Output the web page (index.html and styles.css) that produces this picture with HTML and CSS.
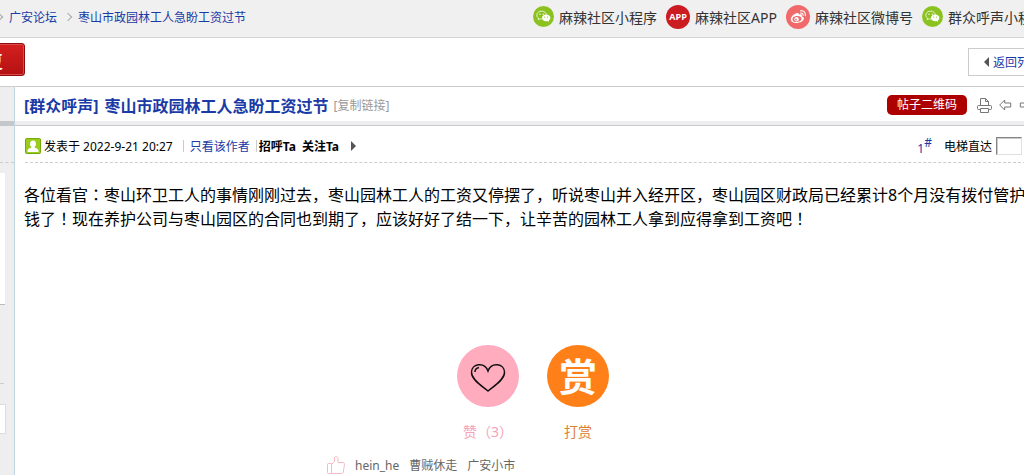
FILE: index.html
```html
<!DOCTYPE html>
<html lang="zh-CN">
<head>
    <meta charset="UTF-8">
    <meta name="viewport" content="width=device-width, initial-scale=1.0">
    <title>枣山市政园林工人急盼工资过节</title>
    <link rel="stylesheet" href="styles.css">
</head>
<body>
    <svg class="sprite" aria-hidden="true">
        <symbol id="wechat" viewBox="0 0 22 22">
            <circle cx="11" cy="11" r="11" fill="#8cc220"/>
            <path d="M9 5.400c-2.900 0-5 1.800-5 4.100 0 1.300.7 2.400 1.800 3.200l-.4 1.700 1.900-1c.5.2 1.100.2 1.700.2 2.900 0 5-1.800 5-4.100s-2.100-4.100-5-4.100z" fill="none" stroke="#fff" stroke-width=".8"/>
            <circle cx="7.300" cy="8.600" r=".7" fill="#fff"/>
            <circle cx="10.700" cy="8.600" r=".7" fill="#fff"/>
            <path d="M13.800 8.800c-2.500 0-4.300 1.600-4.300 3.600s1.800 3.600 4.300 3.600c.5 0 1-.1 1.400-.2l1.700.9-.4-1.500c1-.6 1.700-1.700 1.700-2.800 0-2-1.900-3.600-4.400-3.600z" fill="#fff"/>
            <circle cx="12.300" cy="11.600" r=".6" fill="#8cc220"/>
            <circle cx="15.300" cy="11.600" r=".6" fill="#8cc220"/>
        </symbol>
    </svg>
    <div class="page">
        <header class="top-bar">
            <nav class="crumbs">
                <i class="crumb-arrow"></i>
                <a href="#">广安论坛</a>
                <i class="crumb-arrow"></i>
                <a href="#">枣山市政园林工人急盼工资过节</a>
            </nav>
            <nav class="social">
                <a class="small-icon" href="#"><svg><use href="#wechat"/></svg>麻辣社区小程序</a>
                <a href="#"><span class="app-icon">APP</span>麻辣社区APP</a>
                <a href="#">
                    <svg viewBox="0 0 24 24">
                        <circle cx="12" cy="12" r="12" fill="#f0696b"/>
                        <path d="M10.500 8.200c1.500-.7 2.700-.2 2.300 1.500 2-.8 3.700-.3 3 1.500 1.500.5 2.200 1.400 2 2.600-.3 2.300-3.400 4.200-6.800 4.200-3.600 0-6.400-1.600-6.200-4.100.2-2.100 3-5 5.700-5.700z" fill="#fff"/>
                        <ellipse cx="11" cy="14" rx="4.500" ry="3" fill="#f0696b" transform="rotate(-6 11 14)"/>
                        <circle cx="10.600" cy="14.200" r="2.200" fill="#fff"/>
                        <circle cx="10" cy="14.600" r=".9" fill="#f0696b"/>
                        <path d="M14.500 5.900c3-.8 5.600 1.600 4.800 4.800M14.800 8.100c1.500-.3 2.700.8 2.300 2.300" fill="none" stroke="#fff" stroke-width="1.100" stroke-linecap="round"/>
                    </svg>麻辣社区微博号</a>
                <a class="small-icon" href="#"><svg><use href="#wechat"/></svg>群众呼声小程序</a>
            </nav>
        </header>

        <div class="tool-bar">
            <button class="reply-button" type="button">回复</button>
            <a class="back-link" href="#"><i class="tri-left"></i>返回列表</a>
        </div>

        <div class="thread">
            <aside class="side">
                <div class="side-head"></div>
                <div class="side-name"></div>
                <div class="side-avatar"></div>
                <div class="side-line"></div>
                <div class="side-box"></div>
            </aside>
            <main class="main">
                <div class="title-bar">
                    <h1><a href="#">[群众呼声]</a><a href="#">枣山市政园林工人急盼工资过节</a></h1>
                    <a class="copy-link" href="#">[复制链接]</a>
                    <div class="title-tools">
                        <button class="qr-button" type="button">帖子二维码</button>
                        <a href="#" aria-label="打印">
                            <svg class="print" viewBox="0 0 15 16">
                                <path d="M3.500 8.500v-7h5l3 3v4M8.500 1.500v3h3M3.500 12.500h-2a1 1 0 0 1-1-1v-2a1 1 0 0 1 1-1h12a1 1 0 0 1 1 1v2a1 1 0 0 1-1 1h-2M3.500 11.500h8v4h-8z"/>
                            </svg>
                        </a>
                        <a href="#" aria-label="上一主题">
                            <svg class="arrow" viewBox="0 0 13 12"><path d="M.7 6l5-5v3h6v4h-6v3z"/></svg>
                        </a>
                        <a href="#" aria-label="下一主题">
                            <svg class="arrow" viewBox="0 0 13 12"><path d="M12.300 6l-5-5v3h-6v4h6v3z"/></svg>
                        </a>
                    </div>
                </div>

                <div class="post-info">
                    <svg class="user-icon" viewBox="0 0 16 16">
                        <rect x=".5" y=".5" width="15" height="15" rx="1" fill="#9bcb1d" stroke="#75a80c"/>
                        <path d="M8 2.500c1.900 0 3 1.300 3 3.200 0 1.300-.5 2.300-1.300 2.900v1.100c1.700.4 3.800 1.100 3.800 3v1.300h-11v-1.300c0-1.900 2.100-2.600 3.800-3V8.600C5.500 8 5 7 5 5.700c0-1.900 1.100-3.200 3-3.200z" fill="#fff"/>
                    </svg>
                    <span class="date">发表于 2022-9-21 20:27</span>
                    <i class="pipe"></i>
                    <a href="#">只看该作者</a>
                    <i class="pipe"></i>
                    <b>招呼Ta</b>
                    <b class="follow">关注Ta</b>
                    <i class="tri-right"></i>
                    <div class="floor">
                        <a class="floor-no" href="#">1<sup>#</sup></a>
                        <label for="floor-input">电梯直达</label>
                        <input id="floor-input" type="text">
                    </div>
                </div>

                <p class="message">各位看官<span class="mark" lang="ja">：</span>枣山环卫工人的事情刚刚过去，枣山园林工人的工资又停摆了，听说枣山并入经开区，枣山园区财政局已经累计8个月没有拨付管护钱了<span class="mark" lang="ja">！</span>现在养护公司与枣山园区的合同也到期了，应该好好了结一下，让辛苦的园林工人拿到应得拿到工资吧<span class="mark" lang="ja">！</span></p>

                <div class="actions">
                    <button class="like" type="button">
                        <span class="circle">
                            <svg viewBox="0 0 36 30">
                                <path d="M18 28C13 23.500 1.500 17 1.500 9.500c0-9 13-11 16.500-1.500 3.500-9.500 16.500-7.500 16.500 1.500C34.500 17 23 23.500 18 28z"/>
                                <path d="M5 9c0-2.500 1.500-4 4-4.500"/>
                            </svg>
                        </span>
                        赞（3）
                    </button>
                    <button class="reward" type="button">
                        <span class="circle">赏</span>
                        打赏
                    </button>
                </div>

                <div class="likers">
                    <svg viewBox="0 0 18 18">
                        <path d="M1.500 7.500h3v10h-3a1 1 0 0 1-1-1v-8a1 1 0 0 1 1-1zM4.500 8.500l3-3V2c0-2 3.500-2 3.500.5v4h5c1 0 1.500.7 1.500 1.500l-1.200 8c-.1.900-.7 1.500-1.600 1.500H4.500"/>
                    </svg>
                    <a href="#">hein_he</a>
                    <a href="#">曹贼休走</a>
                    <a href="#">广安小市</a>
                </div>
            </main>
        </div>
    </div>
</body>
</html>
```

FILE: styles.css
```css
* {
    box-sizing: border-box;
}

body, html {
    margin: 0;
    padding: 0;
    height: 100%;
    overflow: hidden;
    background: #fff;
}

body, button, input {
    font-family: "Noto Sans", "Noto Sans CJK SC", sans-serif;
    font-size: 12px;
    color: #000;
}

a {
    color: #1a3aa6;
    text-decoration: none;
}

button {
    padding: 0;
    border: none;
    cursor: pointer;
}

.sprite {
    display: none;
}

/* the board is a little wider than the window */
.page {
    display: flex;
    flex-direction: column;
    min-height: 100%;
    margin-right: -27px;
}

.top-bar {
    display: flex;
    align-items: center;
    justify-content: space-between;
    height: 38px;
    padding-right: 5px;
    padding-bottom: 4px;
    background: #f0f0f0;
    border-bottom: 1px solid #d5d5d5;
    white-space: nowrap;
}

.crumbs {
    display: flex;
    align-items: center;
    gap: 8px;
    margin-left: -4px;
}

.crumb-arrow {
    width: 6px;
    height: 6px;
    margin-right: -1px;
    border-top: 1px solid #aaa;
    border-right: 1px solid #aaa;
    transform: rotate(45deg);
}

.social {
    display: flex;
    align-items: center;
    gap: 9px;
}

.social a {
    display: flex;
    align-items: center;
    gap: 5px;
    font-size: 14px;
    color: #333;
}

.social svg, .app-icon {
    width: 24px;
    height: 24px;
}

.social .small-icon svg {
    width: 21px;
    height: 21px;
}

.app-icon {
    border-radius: 50%;
    background: #cb1c22;
    color: #fff;
    font: bold 9px/24px "Open Sans", sans-serif;
    text-align: center;
}

.tool-bar {
    display: flex;
    align-items: flex-start;
    justify-content: space-between;
    height: 49px;
    padding-top: 5px;
    border-bottom: 1px solid #ccc;
}

.reply-button {
    width: 80px;
    height: 33px;
    margin-left: -55px;
    border: 1px solid #8c0d0d;
    border-radius: 3px;
    box-shadow: inset 0 0 0 1px #dc4a4a;
    background: linear-gradient(#d51f1f, #b41212);
    color: #fff;
    font-size: 18px;
    font-weight: bold;
}

.back-link {
    display: flex;
    align-items: center;
    gap: 4px;
    height: 28px;
    margin-top: 5px;
    padding: 0 9px 0 15px;
    border: 1px solid #ccc;
}

.tri-left {
    border: 5px solid transparent;
    border-right-color: #555;
    border-left: none;
}

.tri-right {
    margin-left: 8px;
    border: 5px solid transparent;
    border-left-color: #555;
    border-right: none;
}

.thread {
    display: flex;
    flex: 1;
}

.side {
    width: 14px;
    background: #eee;
}

.side-head {
    height: 39px;
    border-bottom: 5px solid #c4c8cb;
}

.side-name {
    height: 37px;
    border-bottom: 1px dashed #ccc;
}

.side-avatar {
    height: 132px;
    margin: 10px 9px 0 0;
    background: #fff;
    border-bottom: 1px solid #bbb;
}

.side-line {
    height: 79px;
    margin-right: 10px;
    border-bottom: 1px solid #ccc;
}

.side-box {
    height: 30px;
    margin: 20px 8px 0 0;
    background: #fff;
    border: 1px solid #ddd;
    border-left: none;
}

.main {
    flex: 1;
    min-width: 0;
    border-left: 1px solid #c2d5e3;
}

.title-bar {
    display: flex;
    align-items: center;
    height: 39px;
    padding-left: 9px;
    padding-bottom: 2px;
    border-bottom: 1px solid #c8ccd0;
    box-shadow: inset 0 -4px #eee;
    white-space: nowrap;
}

h1 {
    display: flex;
    gap: 6px;
    margin: 0;
    font-size: 16px;
}

.copy-link {
    margin-left: 5px;
    color: #999;
}

.title-tools {
    display: flex;
    align-items: center;
    gap: 7px;
    margin-left: auto;
    padding-right: 19px;
}

.title-tools a {
    display: flex;
}

.title-tools svg {
    fill: none;
    stroke: #777;
}

.qr-button {
    width: 80px;
    height: 20px;
    margin-right: 3px;
    border-radius: 5px;
    background: #ad0000;
    color: #fff;
    line-height: 20px;
}

.print {
    width: 15px;
    height: 16px;
}

.arrow {
    width: 13px;
    height: 12px;
}

.post-info {
    display: flex;
    align-items: center;
    height: 37px;
    margin-left: 10px;
    padding-top: 3px;
    border-bottom: 1px dashed #ccc;
    white-space: nowrap;
}

.user-icon {
    width: 16px;
    height: 16px;
    margin-right: 3px;
}

.date {
    margin-right: 4px;
}

.pipe {
    width: 1px;
    height: 12px;
    margin: 0 6px;
    background: #ccc;
}

.pipe + b {
    margin-left: -4px;
}

.follow {
    margin: 0 4px 0 6px;
}

.floor {
    display: flex;
    align-items: center;
    margin-left: auto;
    padding-right: 29px;
}

.floor-no {
    display: flex;
    align-items: flex-end;
    margin-right: 12px;
    line-height: 14px;
}

.floor-no sup {
    padding-bottom: 6px;
    font-size: 12px;
}

.floor input {
    width: 26px;
    height: 18px;
    margin-left: 4px;
    padding: 0 2px;
    border: 1px solid;
    border-color: #848484 #e0e0e0 #e0e0e0 #848484;
    box-shadow: inset 1px 1px #ccc;
}

.message {
    min-height: 162px;
    margin: 0;
    padding: 20px 20px 0 9px;
    font-size: 16px;
    line-height: 24px;
}

/* colon and exclamation mark in the middle of their square */
.mark {
    font-family: "Noto Sans CJK JP", sans-serif;
    line-height: 1;
}

.actions {
    display: flex;
    justify-content: center;
    gap: 28px;
    padding-top: 20px;
}

.actions button {
    display: flex;
    flex-direction: column;
    align-items: center;
    gap: 15px;
    width: 62px;
    background: none;
    font-size: 14px;
    line-height: 20px;
    white-space: nowrap;
}

.circle {
    display: flex;
    align-items: center;
    justify-content: center;
    width: 62px;
    height: 62px;
    border-radius: 50%;
}

.actions .like {
    color: #f5a3b7;
}

.like .circle {
    background: #ffacbf;
}

.like svg {
    width: 36px;
    height: 30px;
    margin-top: 4px;
    fill: none;
    stroke: #111;
    stroke-width: 1.5;
}

.actions .reward {
    color: #e08030;
}

.reward .circle {
    background: #ff8019;
    color: #fff;
    font-size: 38px;
    font-weight: bold;
}

.likers {
    display: flex;
    align-items: center;
    gap: 10px;
    max-width: 412px;
    margin: 14px auto 0;
}

.likers a {
    color: #666;
}

.likers svg {
    width: 18px;
    height: 18px;
    fill: none;
    stroke: #f8b8c4;
}
```
